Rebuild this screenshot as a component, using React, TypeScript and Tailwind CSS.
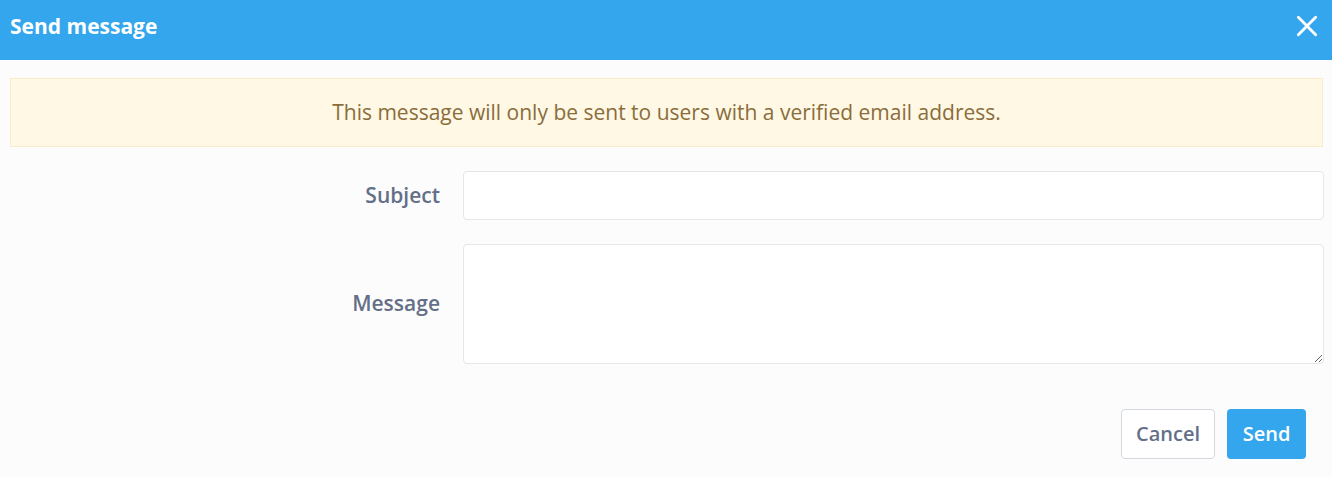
import React from 'react';

export default function App() {
  return (
    <div className="w-[1332px] h-[478px] bg-[#fcfcfc] font-['Open_Sans',sans-serif] overflow-hidden">
      <div className="h-[60px] bg-[#33a6ed] flex items-center justify-between pl-[10px] pr-[12px]">
        <h1 className="text-white text-[21px] font-bold leading-none -mt-[8px]">Send message</h1>
        <button className="text-white -mt-[8px]">
          <svg width="26" height="26" viewBox="0 0 24 24" fill="none" stroke="currentColor" strokeWidth="2.6" strokeLinecap="round">
            <path d="M4 4 L20 20 M20 4 L4 20" />
          </svg>
        </button>
      </div>

      <div className="mt-[18px] ml-[10px] mr-[9px] h-[69px] bg-[#fff8e5] border border-[#faeccb] flex items-center justify-center">
        <p className="text-[#8a6d3b] text-[21px]">This message will only be sent to users with a verified email address.</p>
      </div>

      <div className="mt-[24px] pr-[8px]">
        <div className="flex items-center">
          <label className="w-[440px] text-right text-[21px] font-semibold text-[#646f88]">Subject</label>
          <input className="ml-[23px] flex-1 h-[49px] bg-white border border-[#e6e6e6] rounded-[4px] px-3 outline-none" />
        </div>
        <div className="flex items-center mt-[24px]">
          <label className="w-[440px] text-right text-[21px] font-semibold text-[#646f88]">Message</label>
          <textarea className="ml-[23px] flex-1 h-[120px] bg-white border border-[#e6e6e6] rounded-[4px] px-3 py-2 outline-none" />
        </div>
      </div>

      <div className="flex justify-end gap-[12px] mt-[45px] pr-[26px]">
        <button className="h-[50px] w-[94px] bg-white border border-[#d3d7de] rounded-[4px] text-[20px] font-semibold text-[#646f88]">Cancel</button>
        <button className="h-[50px] w-[79px] bg-[#33a6ed] rounded-[4px] text-[20px] font-semibold text-white">Send</button>
      </div>
    </div>
  );
}
